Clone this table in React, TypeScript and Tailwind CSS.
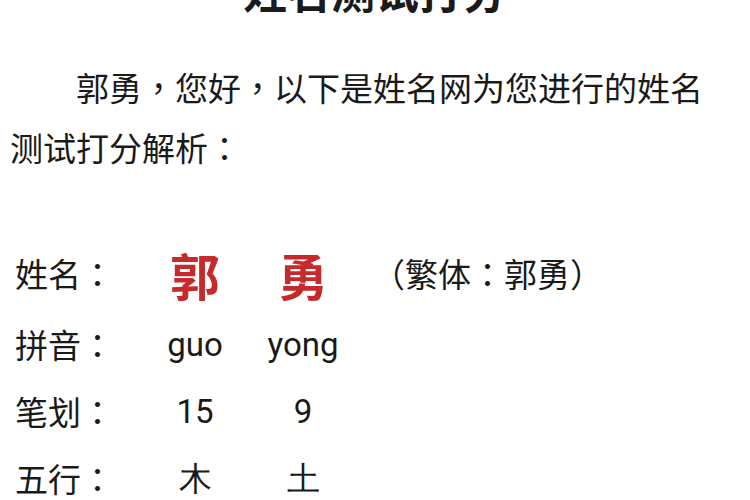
const P = ({ c }: { c: string }) => <span className="font-['Noto_Sans_CJK_TC',sans-serif]">{c}</span>;

const rows = [
  { label: "拼音", a: "guo", b: "yong" },
  { label: "笔划", a: "15", b: "9" },
  { label: "五行", a: "木", b: "土" },
];

export default function App() {
  return (
    <div className="w-[750px] h-[500px] overflow-hidden bg-white text-[#1a1a1a] font-['Noto_Sans_CJK_SC',sans-serif]">
      <h1 className="text-center text-[44px] font-bold leading-[60px] mt-[-40px]">姓名测试打分</h1>

      <p className="mt-[37px] pl-[10px] w-[712px] text-[33px] leading-[60px] indent-[66px]">
        郭勇<P c="，" />您好<P c="，" />以下是姓名网为您进行的姓名测试打分解析<P c="：" />
      </p>

      <div className="mt-[60px] pl-[15px]">
        <div className="flex items-center h-[74px]">
          <div className="w-[126px] text-[33px]">姓名<P c="：" /></div>
          <div className="w-[108px] text-center text-[50px] font-bold text-[#c62a2d]">郭</div>
          <div className="w-[108px] text-center text-[50px] font-bold text-[#c62a2d]">勇</div>
          <div className="ml-[15px] text-[33px]"><P c="（" />繁体<P c="：" />郭勇<P c="）" /></div>
        </div>
        {rows.map((r) => (
          <div key={r.label} className="flex items-center h-[67px]">
            <div className="w-[126px] text-[33px]">{r.label}<P c="：" /></div>
            <div className="w-[108px] text-center text-[33px] font-['Roboto',sans-serif]">{r.a}</div>
            <div className="w-[108px] text-center text-[33px] font-['Roboto',sans-serif]">{r.b}</div>
          </div>
        ))}
      </div>
    </div>
  );
}
